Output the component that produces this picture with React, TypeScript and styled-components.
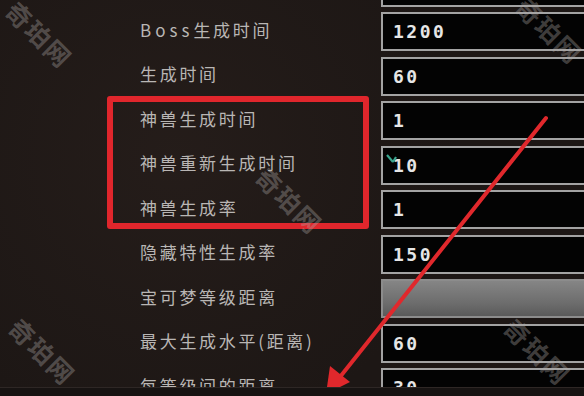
import React from 'react';
import styled, { createGlobalStyle } from 'styled-components';

const GlobalStyle = createGlobalStyle`
  html, body {
    margin: 0;
    padding: 0;
    width: 584px;
    height: 396px;
    overflow: hidden;
    background: #1d1715;
  }
`;

const Screen = styled.div`
  position: relative;
  width: 584px;
  height: 396px;
  overflow: hidden;
  background:
    radial-gradient(circle at 30% 40%, rgba(60, 45, 40, 0.25), transparent 60%),
    #1d1715;
  font-family: "Noto Sans CJK SC", "Noto Sans", sans-serif;
`;

const List = styled.div`
  display: flex;
  flex-direction: column;
  gap: 5.5px;
  margin-top: -32.5px;
`;

const Row = styled.div`
  display: grid;
  grid-template-columns: 241px 260px;
  align-items: center;
  padding-left: 140px;
  height: 39px;
`;

const Label = styled.span`
  color: #b9b6b4;
  font-size: 17px;
  letter-spacing: 2.7px;
  line-height: 1;
  margin-top: -5px;
  white-space: nowrap;
`;

const Latin = styled.span`
  letter-spacing: 4px;
`;

const Field = styled.div<{ $disabled?: boolean }>`
  position: relative;
  box-sizing: border-box;
  height: 39px;
  display: flex;
  align-items: center;
  padding-left: 10px;
  border: 2px solid ${p => (p.$disabled ? '#8c8c8c' : '#a3a3a3')};
  background: ${p =>
    p.$disabled ? 'linear-gradient(#858585, #6c6c6c 65%, #5a5a5a)' : '#030303'};
  color: #e6e6e6;
  font-family: "DejaVu Sans Mono", "Liberation Mono", monospace;
  font-weight: 700;
  font-size: 18px;
  letter-spacing: 2.5px;
`;

const Cursor = styled.svg`
  position: absolute;
  left: 3px;
  top: 5px;
`;

const Highlight = styled.div`
  position: absolute;
  left: 107px;
  top: 96px;
  width: 262px;
  height: 133px;
  box-sizing: border-box;
  border: 6px solid #e0262c;
  border-radius: 3px;
`;

const Overlay = styled.svg`
  position: absolute;
  left: 0;
  top: 0;
`;

const Watermark = styled.span`
  position: absolute;
  transform: translate(-50%, -50%) rotate(45deg);
  color: rgba(175, 170, 168, 0.36);
  font-size: 25px;
  font-weight: 700;
  letter-spacing: 2px;
  white-space: nowrap;
`;

const BottomBar = styled.div`
  position: absolute;
  left: 0;
  right: 0;
  bottom: 0;
  height: 8px;
  background: #171312;
  border-top: 1px solid #2e2725;
`;

type Item = { label: React.ReactNode; value?: string; disabled?: boolean; cursor?: boolean };

const items: Item[] = [
  { label: '', value: '' },
  { label: <><Latin>Boss</Latin>生成时间</>, value: '1200' },
  { label: '生成时间', value: '60' },
  { label: '神兽生成时间', value: '1' },
  { label: '神兽重新生成时间', value: '10', cursor: true },
  { label: '神兽生成率', value: '1' },
  { label: '隐藏特性生成率', value: '150' },
  { label: '宝可梦等级距离', disabled: true },
  { label: '最大生成水平(距离)', value: '60' },
  { label: '每等级间的距离', value: '30' },
];

const marks = [
  { x: 40, y: 34 },
  { x: 550, y: 30 },
  { x: 290, y: 200 },
  { x: 43, y: 351 },
  { x: 538, y: 351 },
];

export default function App() {
  return (
    <Screen>
      <GlobalStyle />
      <List>
        {items.map((it, i) => (
          <Row key={i}>
            <Label>{it.label}</Label>
            <Field $disabled={it.disabled}>
              {it.cursor && (
                <Cursor width="12" height="12" viewBox="0 0 12 12">
                  <path d="M1 2 L7 9 M7 9 L10 4" stroke="#3aa58e" strokeWidth="2.2" fill="none" />
                </Cursor>
              )}
              {it.value}
            </Field>
          </Row>
        ))}
      </List>
      <Highlight />
      <Overlay width="584" height="396" viewBox="0 0 584 396">
        <line x1="546" y1="118" x2="336" y2="382" stroke="#e0282c" strokeWidth="4" strokeLinecap="round" />
        <polygon points="326,394 330,366 350,382" fill="#e0282c" />
      </Overlay>
      {marks.map((m, i) => (
        <Watermark key={i} style={{ left: m.x, top: m.y }}>奇珀网</Watermark>
      ))}
      <BottomBar />
    </Screen>
  );
}
